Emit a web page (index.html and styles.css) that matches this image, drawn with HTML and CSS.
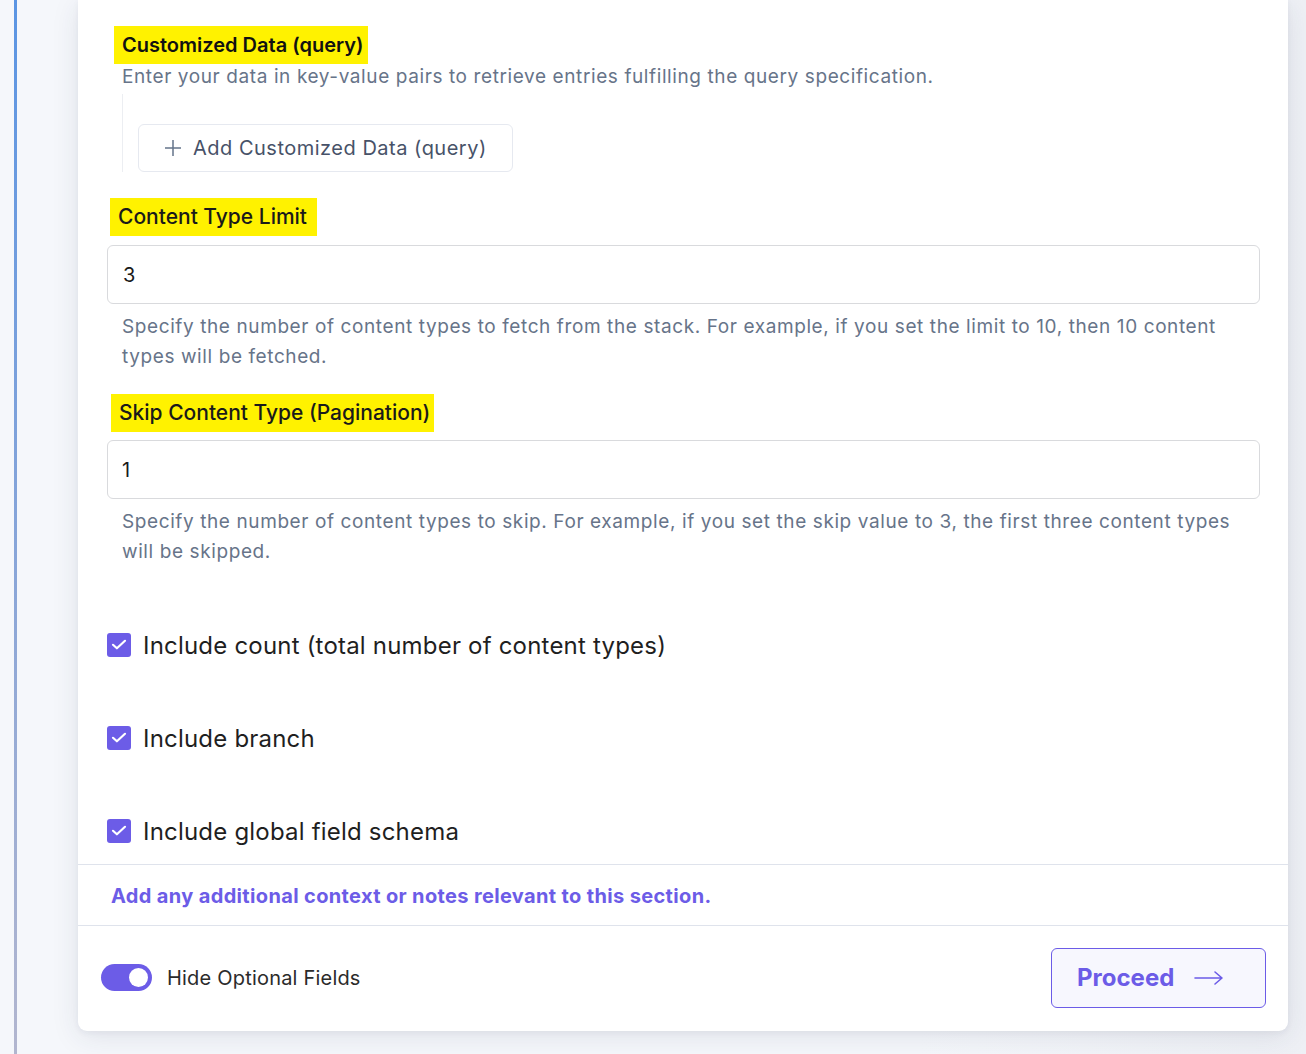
FILE: index.html
```html
<!DOCTYPE html>
<html lang="en">
<head>
<meta charset="utf-8">
<title>Content Types</title>
<link rel="stylesheet" href="styles.css">
</head>
<body>
<div class="page">
  <div class="rail"></div>
  <div class="rail-line"></div>
  <div class="main">
    <div class="card">
      <div class="body">
        <div class="field field-query">
          <div class="label label-query"><span>Customized Data (query)</span></div>
          <div class="desc desc-query">Enter your data in key-value pairs to retrieve entries fulfilling the query specification.</div>
          <div class="query-group">
            <button class="add-btn" type="button">
              <svg class="plus" width="20" height="20" viewBox="0 0 20 20"><path d="M10 2v16M2 10h16" stroke="#64748b" stroke-width="1.5" fill="none"/></svg>
              <span>Add Customized Data (query)</span>
            </button>
          </div>
        </div>

        <div class="field">
          <div class="label label-limit"><span>Content Type Limit</span></div>
          <div class="input">3</div>
          <div class="help">Specify the number of content types to fetch from the stack. For example, if you set the limit to 10, then 10 content types will be fetched.</div>
        </div>

        <div class="field field-skip">
          <div class="label label-skip"><span>Skip Content Type (Pagination)</span></div>
          <div class="input input-skip">1</div>
          <div class="help">Specify the number of content types to skip. For example, if you set the skip value to 3, the first three content types will be skipped.</div>
        </div>

        <div class="checks">
          <label class="check"><span class="box"><svg width="24" height="24" viewBox="0 0 24 24"><path d="M6 11.8l3.9 3.5L18 7.8" stroke="#fff" stroke-width="2.2" fill="none" stroke-linecap="round" stroke-linejoin="round"/></svg></span><span>Include count (total number of content types)</span></label>
          <label class="check"><span class="box"><svg width="24" height="24" viewBox="0 0 24 24"><path d="M6 11.8l3.9 3.5L18 7.8" stroke="#fff" stroke-width="2.2" fill="none" stroke-linecap="round" stroke-linejoin="round"/></svg></span><span>Include branch</span></label>
          <label class="check"><span class="box"><svg width="24" height="24" viewBox="0 0 24 24"><path d="M6 11.8l3.9 3.5L18 7.8" stroke="#fff" stroke-width="2.2" fill="none" stroke-linecap="round" stroke-linejoin="round"/></svg></span><span>Include global field schema</span></label>
        </div>
      </div>

      <div class="note">Add any additional context or notes relevant to this section.</div>

      <div class="footer">
        <div class="toggle-wrap">
          <span class="toggle"><span class="knob"></span></span>
          <span class="toggle-label">Hide Optional Fields</span>
        </div>
        <button class="proceed" type="button">
          <span>Proceed</span>
          <svg width="30" height="16" viewBox="0 0 30 16"><path d="M1 8h27M21 2l7 6-7 6" stroke="#6c5ce7" stroke-width="1.6" fill="none" stroke-linecap="round" stroke-linejoin="round"/></svg>
        </button>
      </div>
    </div>
  </div>
</div>
</body>
</html>
```

FILE: styles.css
```css
* { box-sizing: border-box; }
html, body { margin: 0; padding: 0; }
body {
  font-family: Inter, "Noto Sans", "Liberation Sans", sans-serif;
  background: #f4f6fa;
  color: #1f1f1f;
  height: 1054px;
  overflow: hidden;
}
.page {
  display: flex;
  height: 1054px;
}
.rail {
  width: 14px;
  background: #f5f7fb;
  flex: none;
}
.rail-line {
  width: 3px;
  flex: none;
  background: linear-gradient(to bottom, #5b95e3 0%, #8aa6d8 55%, #b2b6cf 100%);
}
.main {
  flex: 1;
  padding-left: 61px;
  padding-right: 18px;
  background: linear-gradient(to right, #f5f7fb 0%, #f5f7fb 70%, #eef0f5 100%);
}
.card {
  background: #fff;
  border-radius: 0 0 9px 9px;
  box-shadow: 0 6px 28px rgba(40, 45, 80, 0.10), 0 2px 6px rgba(40, 45, 80, 0.05);
  width: 1210px;
}
.body {
  padding: 26px 28px 21px 29px;
}
.label {
  display: flex;
}
.label span {
  background: #fff200;
  height: 38px;
  line-height: 38px;
  padding: 0 10px 0 8px;
  font-size: 21px;
  font-weight: 500;
  color: #1a1a1a;
}
.label-query { padding-left: 7px; }
.label-query span { font-size: 20px; font-weight: 600; color: #111; padding-right: 4px; }
.label-limit { padding-left: 3px; }
.label-skip { padding-left: 4px; }
.label-skip span { padding-right: 4px; }
.desc {
  font-size: 19px;
  line-height: 26px;
  letter-spacing: 0.6px;
  color: #677489;
  padding-left: 15px;
}
.query-group {
  margin: 4px 0 0 15px;
  border-left: 1px solid #eceef2;
  padding: 30px 0 0 15px;
}
.add-btn {
  display: inline-flex;
  align-items: center;
  gap: 10px;
  height: 48px;
  padding: 0 25px 0 24px;
  background: #fff;
  border: 1px solid #e6e9f0;
  border-radius: 6px;
  font-family: inherit;
  font-size: 20px;
  letter-spacing: 0.5px;
  color: #475268;
  cursor: pointer;
}
.field + .field { margin-top: 26px; }
.field-skip { margin-top: 22px !important; }
.input {
  margin-top: 9px;
  height: 59px;
  border: 1px solid #d9dadd;
  border-radius: 6px;
  padding: 0 15px;
  display: flex;
  align-items: center;
  font-size: 20px;
  color: #1a1a1a;
}
.input-skip { margin-top: 8px; padding-left: 14px; }
.help {
  margin-top: 8px;
  padding-left: 15px;
  font-size: 19px;
  line-height: 30px;
  letter-spacing: 0.6px;
  color: #677489;
}
.checks {
  display: flex;
  flex-direction: column;
  gap: 69px;
  margin-top: 66px;
}
.check {
  display: flex;
  align-items: center;
  gap: 12px;
  height: 24px;
  font-size: 24px;
  color: #1f1f1f;
  letter-spacing: 0.2px;
}
.box {
  width: 24px;
  height: 24px;
  border-radius: 3px;
  background: #6c5ce7;
  display: flex;
  align-items: center;
  justify-content: center;
  flex: none;
}
.box svg { display: block; }
.note {
  border-top: 1px solid #dfe3ec;
  border-bottom: 1px solid #dfe3ec;
  height: 62px;
  display: flex;
  align-items: center;
  padding: 2px 0 0 33px;
  font-size: 20px;
  font-weight: 700;
  letter-spacing: 0.35px;
  color: #6c5ce7;
}
.footer {
  height: 105px;
  display: flex;
  align-items: center;
  justify-content: space-between;
  padding: 0 22px 2px 23px;
}
.toggle-wrap {
  display: flex;
  align-items: center;
  gap: 15px;
}
.toggle {
  width: 51px;
  height: 27px;
  border-radius: 14px;
  background: #6c5ce7;
  display: flex;
  align-items: center;
  justify-content: flex-end;
  padding-right: 4px;
}
.knob {
  width: 19px;
  height: 19px;
  border-radius: 50%;
  background: #fff;
}
.toggle-label {
  font-size: 20px;
  letter-spacing: 0.2px;
  color: #2b2b2b;
}
.proceed {
  width: 215px;
  height: 60px;
  border: 1px solid #6c5ce7;
  border-radius: 6px;
  background: #f7f7fe;
  display: flex;
  align-items: center;
  gap: 20px;
  padding-left: 25px;
  font-family: inherit;
  font-size: 24px;
  font-weight: 700;
  color: #6c5ce7;
  cursor: pointer;
}
```
